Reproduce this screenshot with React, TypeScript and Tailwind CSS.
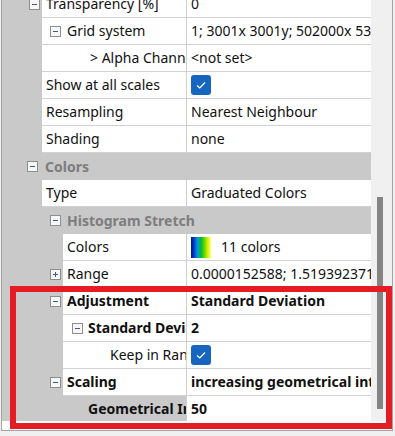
import React from 'react';

type RowProps = {
  cell: number; // x where the white label cell starts
  label: React.ReactNode;
  textX: number;
  value?: React.ReactNode;
  toggle?: { x: number; kind: 'minus' | 'plus' };
  bold?: boolean;
  header?: boolean;
  selected?: boolean;
  className?: string;
};

const Toggle: React.FC<{ kind: 'minus' | 'plus' }> = ({ kind }) => (
  <span className="relative block w-[11px] h-[11px] border border-[#8e8e8e] bg-[#f7f7f7]">
    <span className="absolute left-[2px] top-[4px] w-[5px] h-px bg-[#3a5a9c]" />
    {kind === 'plus' && <span className="absolute left-[4px] top-[2px] w-px h-[5px] bg-[#3a5a9c]" />}
  </span>
);

const Check: React.FC = () => (
  <span className="flex items-center justify-center w-[20px] h-[20px] rounded-[3px] bg-[#1666c0]">
    <svg width="12" height="10" viewBox="0 0 12 10">
      <path d="M2 5.5 L4.8 8 L10 2.5" fill="none" stroke="white" strokeWidth="1.2" />
    </svg>
  </span>
);

const Ramp: React.FC = () => (
  <span className="block w-[20px] h-[21px] bg-[linear-gradient(to_right,#00128a,#0044d0,#00a0d8,#00b838,#60d800,#d8f000,#ffff80)]" />
);

const Row: React.FC<RowProps> = ({ cell, label, textX, value, toggle, bold, header, selected, className }) => {
  const labelBg = selected ? 'bg-[#c9c9c9]' : 'bg-white';
  return (
    <div className={`relative flex h-[27px] shrink-0 bg-[#c9c9c9] ${className ?? ''}`}>
      {toggle && (
        <span className="absolute top-[8px] z-10" style={{ left: toggle.x - 2 }}>
          <Toggle kind={toggle.kind} />
        </span>
      )}
      {header ? (
        <div
          className="flex items-center flex-1 whitespace-nowrap text-[#7d7d7d] font-bold"
          style={{ paddingLeft: textX - 2 }}
        >
          {label}
        </div>
      ) : (
        <>
          <div className="shrink-0" style={{ width: cell - 2 }} />
          <div
            className={`flex items-center shrink-0 overflow-hidden whitespace-nowrap ${labelBg} border-b border-[#d2d2d2] border-r border-r-[#cfcfcf] ${bold ? 'font-bold' : ''}`}
            style={{ width: 187 - cell, paddingLeft: textX - cell }}
          >
            {label}
          </div>
          <div
            className={`flex items-center flex-1 overflow-hidden whitespace-nowrap pl-[4px] bg-white border-b border-[#d2d2d2] ${bold ? 'font-bold' : ''}`}
          >
            {value}
          </div>
        </>
      )}
    </div>
  );
};

export default function App() {
  return (
    <div className="w-[395px] h-[436px] bg-[#f0f0f0] overflow-hidden text-[14px] text-[#111] font-['Segoe_UI','Noto_Sans',sans-serif] leading-none">
      <div className="relative ml-[1px] w-[392px] h-[431px] bg-white border-l border-r border-b border-[#a3a3a3] flex">
        <div className="w-[369px] h-[421px] overflow-hidden flex flex-col bg-[#c9c9c9]">
          <Row className="-mt-[9px]" cell={42} textX={46} label="Transparency [%]" value="0" toggle={{ x: 29, kind: 'minus' }} />
          <Row cell={42} textX={67} label="Grid system" value="1; 3001x 3001y; 502000x 53" toggle={{ x: 50, kind: 'minus' }} />
          <Row cell={42} textX={90} label="> Alpha Channel" value="<not set>" />
          <Row cell={42} textX={46} label="Show at all scales" value={<Check />} />
          <Row cell={42} textX={46} label="Resampling" value="Nearest Neighbour" />
          <Row cell={42} textX={46} label="Shading" value="none" />
          <Row cell={42} textX={45} label="Colors" header toggle={{ x: 27, kind: 'minus' }} />
          <Row cell={42} textX={46} label="Type" value="Graduated Colors" />
          <Row cell={42} textX={67} label="Histogram Stretch" header toggle={{ x: 50, kind: 'minus' }} />
          <Row cell={63} textX={67} label="Colors" value={<span className="flex items-center gap-[10px]"><Ramp /><span>11 colors</span></span>} />
          <Row cell={63} textX={67} label="Range" value="0.0000152588; 1.519392371" toggle={{ x: 50, kind: 'plus' }} />
          <Row cell={63} textX={67} bold label="Adjustment" value="Standard Deviation" toggle={{ x: 50, kind: 'minus' }} />
          <Row cell={63} textX={88} bold label="Standard Deviation" value="2" toggle={{ x: 72, kind: 'minus' }} />
          <Row cell={63} textX={110} label="Keep in Range" value={<Check />} />
          <Row cell={63} textX={67} bold label="Scaling" value="increasing geometrical intervals" toggle={{ x: 50, kind: 'minus' }} />
          <Row cell={63} textX={88} bold selected label="Geometrical Interval" value="50" />
        </div>
        <div className="w-[21px] h-[421px] bg-[#f0f0f0] pt-[197px]">
          <div className="ml-[6px] w-[6px] h-[212px] bg-[#858585]" />
        </div>
        <div className="pointer-events-none absolute left-[8px] top-[286px] w-[382px] h-[143px] border-[6px] border-[#e51c23]" />
      </div>
    </div>
  );
}
